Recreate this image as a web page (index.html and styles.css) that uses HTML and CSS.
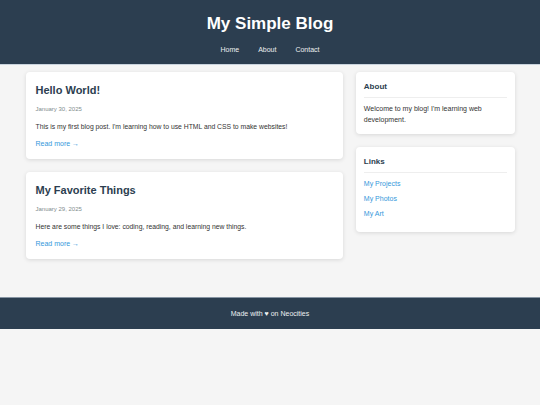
FILE: index.html
```html
<!DOCTYPE html>
<html lang="en">
<head>
    <meta charset="UTF-8">
    <meta name="viewport" content="width=device-width, initial-scale=1.0">
    <title>My Simple Blog</title>
    <link rel="stylesheet" href="styles.css">
</head>
<body>
    <header>
        <h1 class="site-title">My Simple Blog</h1>
        <nav>
            <ul>
                <li><a href="#">Home</a></li>
                <li><a href="#">About</a></li>
                <li><a href="#">Contact</a></li>
            </ul>
        </nav>
    </header>

    <div class="container">
        <main class="posts">
            <article class="post">
                <h2>Hello World!</h2>
                <div class="post-date">January 30, 2025</div>
                <p>This is my first blog post. I'm learning how to use HTML and CSS to make websites!</p>
                <a href="#" class="read-more">Read more &rarr;</a>
            </article>

            <article class="post">
                <h2>My Favorite Things</h2>
                <div class="post-date">January 29, 2025</div>
                <p>Here are some things I love: coding, reading, and learning new things.</p>
                <a href="#" class="read-more">Read more &rarr;</a>
            </article>
        </main>

        <aside class="sidebar">
            <div class="widget">
                <h3>About</h3>
                <p>Welcome to my blog! I'm learning web development.</p>
            </div>

            <div class="widget">
                <h3>Links</h3>
                <ul class="links">
                    <li><a href="#">My Projects</a></li>
                    <li><a href="#">My Photos</a></li>
                    <li><a href="#">My Art</a></li>
                </ul>
            </div>
        </aside>
    </div>

    <footer>
        <p>Made with &hearts; on Neocities</p>
    </footer>
</body>
</html>
```

FILE: styles.css
```css
body {
    font-family: "Liberation Sans", Arial, sans-serif;
    margin: 0;
    padding: 0;
    background-color: #f5f5f5;
    color: #333;
}

header {
    background-color: #2c3e50;
    color: #fff;
    text-align: center;
    padding: 14px 0 9px;
    border-bottom: 1px solid #c9d3dd;
}

.site-title {
    margin: 0 0 10px;
    font-size: 17px;
    line-height: 20px;
}

nav ul {
    list-style: none;
    margin: 0;
    padding: 0;
    display: flex;
    justify-content: center;
    gap: 19px;
    font-size: 7px;
    line-height: 11px;
}

nav ul li a {
    text-decoration: none;
    color: #ecf0f1;
}

.container {
    max-width: 489px;
    margin: 7px auto 38px;
    display: grid;
    grid-template-columns: 2fr 1fr;
    gap: 13px;
}

.posts,
.sidebar {
    display: flex;
    flex-direction: column;
    gap: 13px;
}

.post,
.widget {
    background-color: #fff;
    border-radius: 4px;
    box-shadow: 0 1px 4px rgba(0, 0, 0, 0.12);
}

.post {
    padding: 11px 10px 10px;
}

.post h2 {
    margin: 0 0 8px;
    font-size: 11px;
    line-height: 14px;
    color: #2c3e50;
}

.post-date {
    font-size: 6px;
    line-height: 9px;
    color: #7f8c8d;
    margin-bottom: 7px;
}

.post p {
    margin: 0 0 6px;
    font-size: 6.8px;
    line-height: 11px;
}

.read-more {
    display: block;
    font-size: 7px;
    line-height: 11px;
    color: #3498db;
    text-decoration: none;
}

.widget {
    padding: 9px 8px;
}

.widget h3 {
    margin: 0 0 5px;
    padding-bottom: 5px;
    border-bottom: 1px solid #eee;
    font-size: 8px;
    line-height: 11px;
    color: #2c3e50;
}

.widget p {
    margin: 0;
    font-size: 7px;
    line-height: 11px;
}

.links {
    list-style: none;
    margin: 0;
    padding: 0;
}

.links li {
    margin-bottom: 4px;
    font-size: 7px;
    line-height: 11px;
}

.links a {
    color: #3498db;
    text-decoration: none;
}

footer {
    background-color: #2c3e50;
    color: #ecf0f1;
    text-align: center;
    border-top: 1px solid #8795a3;
    padding: 10px 0;
}

footer p {
    margin: 0;
    font-size: 7px;
    line-height: 11px;
}
```
